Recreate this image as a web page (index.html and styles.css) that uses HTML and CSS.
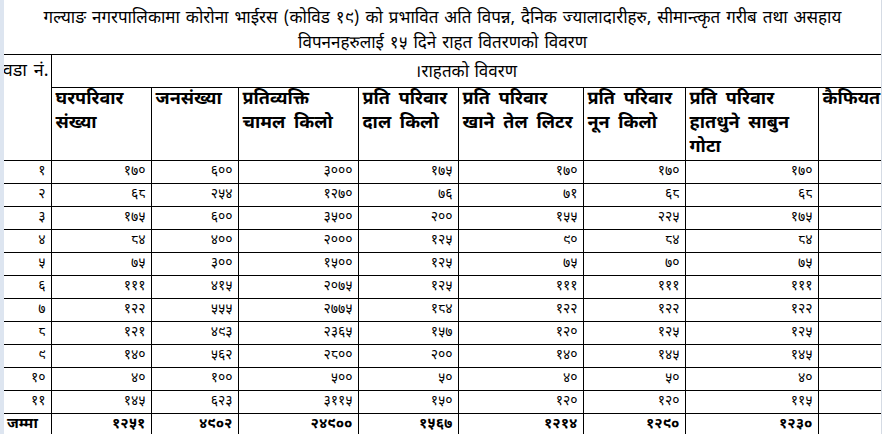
FILE: index.html
```html
<!DOCTYPE html>
<html lang="ne">
<head>
<meta charset="utf-8">
<title>राहत वितरणको विवरण</title>
<link rel="stylesheet" href="styles.css">
</head>
<body>
<div class="sheet">
  <div class="rowhead"></div>
  <div class="content">
    <div class="title">
      <div class="title-line">गल्याङ नगरपालिकामा कोरोना भाईरस (कोविड १९) को प्रभावित अति विपन्न, दैनिक ज्यालादारीहरु, सीमान्त्कृत गरीब तथा असहाय</div>
      <div class="title-line">विपननहरुलाई १५ दिने राहत वितरणको विवरण</div>
    </div>
    <table class="grid">
      <colgroup>
        <col class="c0"><col class="c1"><col class="c2"><col class="c3"><col class="c4"><col class="c5"><col class="c6"><col class="c7"><col class="c8">
      </colgroup>
      <thead>
        <tr class="h1">
          <th rowspan="2" class="ward"><div class="ward-clip"><span>वडा नं.</span></div></th>
          <th colspan="8" class="group">।राहतको विवरण</th>
        </tr>
        <tr class="h2">
          <th>घरपरिवार संख्या</th>
          <th>जनसंख्या</th>
          <th>प्रतिव्यक्ति<br>चामल किलो</th>
          <th>प्रति परिवार<br>दाल किलो</th>
          <th>प्रति परिवार<br>खाने तेल लिटर</th>
          <th>प्रति परिवार<br>नून किलो</th>
          <th>प्रति परिवार<br>हातधुने साबुन<br>गोटा</th>
          <th>कैफियत</th>
        </tr>
      </thead>
      <tbody>
        <tr><td>१</td><td>१७०</td><td>६००</td><td>३०००</td><td>१७५</td><td>१७०</td><td>१७०</td><td>१७०</td><td></td></tr>
        <tr><td>२</td><td>६८</td><td>२५४</td><td>१२७०</td><td>७६</td><td>७१</td><td>६८</td><td>६८</td><td></td></tr>
        <tr><td>३</td><td>१७५</td><td>६००</td><td>३५००</td><td>२००</td><td>१५५</td><td>२२५</td><td>१७५</td><td></td></tr>
        <tr><td>४</td><td>८४</td><td>४००</td><td>२०००</td><td>१२५</td><td>९०</td><td>८४</td><td>८४</td><td></td></tr>
        <tr><td>५</td><td>७५</td><td>३००</td><td>१५००</td><td>१२५</td><td>७५</td><td>७०</td><td>७५</td><td></td></tr>
        <tr><td>६</td><td>१११</td><td>४१५</td><td>२०७५</td><td>१२५</td><td>१११</td><td>१११</td><td>१११</td><td></td></tr>
        <tr><td>७</td><td>१२२</td><td>५५५</td><td>२७७५</td><td>१८४</td><td>१२२</td><td>१२२</td><td>१२२</td><td></td></tr>
        <tr><td>८</td><td>१२१</td><td>४९३</td><td>२३६५</td><td>१५७</td><td>१२०</td><td>१२५</td><td>१२५</td><td></td></tr>
        <tr><td>९</td><td>१४०</td><td>५६२</td><td>२८००</td><td>२००</td><td>१४०</td><td>१४५</td><td>१४५</td><td></td></tr>
        <tr><td>१०</td><td>४०</td><td>१००</td><td>५००</td><td>५०</td><td>४०</td><td>५०</td><td>४०</td><td></td></tr>
        <tr><td>११</td><td>१४५</td><td>६२३</td><td>३११५</td><td>१५०</td><td>१२०</td><td>१२०</td><td>११५</td><td></td></tr>
        <tr class="total"><td class="label">जम्मा</td><td>१२५१</td><td>४९०२</td><td>२४९००</td><td>१५६७</td><td>१२१४</td><td>१२९०</td><td>१२३०</td><td></td></tr>
      </tbody>
    </table>
    <div class="below">
      <span class="gl g1"></span><span class="gl g2"></span><span class="gl g3"></span><span class="gl g4"></span><span class="gl g5"></span><span class="gl g6"></span><span class="gl g7"></span><span class="gl g8"></span>
    </div>
  </div>
  <div class="rightedge"></div>
</div>
</body>
</html>
```

FILE: styles.css
```css
html, body {
  margin: 0;
  padding: 0;
  background: #ffffff;
}

body {
  font-family: "Noto Sans Devanagari", "Lohit Devanagari", "FreeSans", "Noto Sans", sans-serif;
  color: #000000;
  width: 884px;
  height: 434px;
  overflow: hidden;
}

.sheet {
  display: flex;
  width: 884px;
  height: 434px;
}

.rowhead {
  width: 4px;
  flex: none;
  background: #dde5f0;
}

.content {
  width: 877px;
  flex: none;
  display: flex;
  flex-direction: column;
}

.rightedge {
  flex: 1;
  border-left: 1px solid #d5dbe4;
}

.title {
  height: 54px;
  display: flex;
  flex-direction: column;
  align-items: center;
  justify-content: center;
  gap: 3px;
  font-size: 17px;
  font-weight: 400;
  line-height: 22px;
  word-spacing: 1.5px;
  padding-top: 8px;
  box-sizing: border-box;
}

.title-line {
  white-space: nowrap;
}

.grid {
  border-collapse: collapse;
  table-layout: fixed;
  width: 877px;
}

.c0 { width: 47px; }
.c1 { width: 100px; }
.c2 { width: 87px; }
.c3 { width: 120px; }
.c4 { width: 100px; }
.c5 { width: 125px; }
.c6 { width: 102px; }
.c7 { width: 133px; }
.c8 { width: 63px; }

.grid th,
.grid td {
  border: 1px solid #000000;
  padding: 0 4px;
  overflow: hidden;
  white-space: nowrap;
}

.grid th {
  text-align: left;
  vertical-align: top;
  font-weight: 700;
  font-size: 18px;
  line-height: 24px;
  word-spacing: 4px;
}

.grid tr > :first-child {
  border-left: 0;
}

.h1 th {
  height: 29px;
}

.h1 .ward {
  font-weight: 400;
  font-size: 18px;
  padding: 5px 2px 0 0;
  word-spacing: 2px;
}

.ward-clip {
  display: flex;
  justify-content: flex-end;
  overflow: hidden;
  white-space: nowrap;
}

.ward-clip span {
  flex: none;
}

.h1 .group {
  font-weight: 400;
  text-align: center;
  vertical-align: middle;
  font-size: 17px;
  padding-top: 3px;
  word-spacing: 1px;
}

.h2 th {
  height: 68px;
  white-space: normal;
  padding-top: 0;
}

.grid td {
  height: 22px;
  text-align: right;
  vertical-align: middle;
  font-size: 14px;
  line-height: 20px;
  padding: 0 5px;
}

.total td {
  font-weight: 700;
  font-size: 15px;
}

.total .label {
  text-align: left;
  padding-left: 3px;
}

.below {
  position: relative;
  flex: 1;
}

.gl {
  position: absolute;
  top: 0;
  bottom: 0;
  width: 1px;
  background: #dadfe6;
}

.g1 { left: 47px; }
.g2 { left: 147px; }
.g3 { left: 234px; }
.g4 { left: 354px; }
.g5 { left: 454px; }
.g6 { left: 579px; }
.g7 { left: 681px; }
.g8 { left: 814px; }
```
